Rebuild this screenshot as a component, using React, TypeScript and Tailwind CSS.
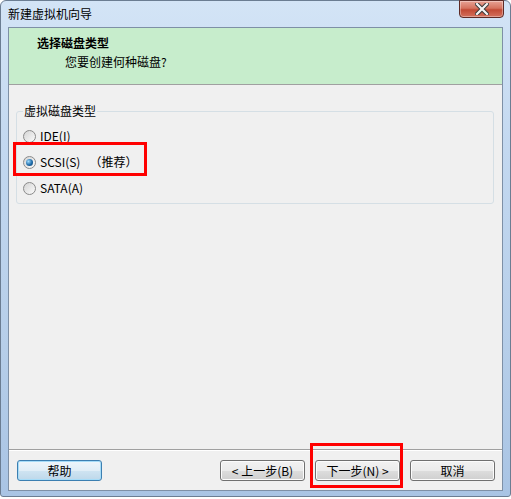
import React from "react";

const font = "font-['SimSun','Noto_Sans_CJK_SC',sans-serif]";

function Radio({ checked, label, extra }: { checked?: boolean; label: string; extra?: string }) {
  return (
    <div className="flex items-center h-[26px]">
      <div className="w-[13px] h-[13px] rounded-full border border-[#8a8a8a] bg-[linear-gradient(135deg,#d4d4d4,#fbfbfb)] flex items-center justify-center">
        {checked && (
          <div className="w-[7px] h-[7px] rounded-full bg-[radial-gradient(circle_at_35%_35%,#9fdcff,#1d6aa8_55%,#0c3d66)]" />
        )}
      </div>
      <span className="ml-[4px] text-[12px] leading-[16px] text-black">{label}</span>
      {extra && <span className="ml-[9px] text-[12px] leading-[16px] text-black">{extra}</span>}
    </div>
  );
}

function Btn({ children, primary }: { children: React.ReactNode; primary?: boolean }) {
  return (
    <button
      className={`w-[85px] h-[21px] rounded-[3px] border text-[12px] leading-[16px] text-black flex items-center justify-center ${
        primary
          ? "border-[#3c7fb1] shadow-[inset_0_0_0_1px_#a6dcf8] bg-[linear-gradient(#eef6fb_0%,#e1eef7_50%,#cfe4f2_51%,#bed8ea_100%)]"
          : "border-[#707070] bg-[linear-gradient(#f2f2f2_0%,#ebebeb_50%,#dddddd_51%,#cfcfcf_100%)] shadow-[inset_0_0_0_1px_#fcfcfc]"
      }`}
    >
      {children}
    </button>
  );
}

export default function App() {
  return (
    <div className={`relative w-[511px] h-[499px] bg-white ${font}`}>
      <div className="w-[511px] h-[497px] flex flex-col rounded-t-[6px] rounded-b-[3px] border border-[#6b7d92] bg-[linear-gradient(180deg,#d3e4f6_0%,#c3d8f0_30%,#b6cee9_70%,#a9c4e4_100%)]">
        {/* Title bar */}
        <div className="h-[26px] flex items-start shrink-0">
          <span className="ml-[7px] mt-[5px] text-[12px] leading-[16px] text-black">新建虚拟机向导</span>
          <div className="ml-auto mr-[6px] w-[45px] h-[18px] -mt-px rounded-b-[4px] border border-[#5e2a25] bg-[linear-gradient(180deg,#e8a295_0%,#d5735f_45%,#c24a35_55%,#d3705c_100%)] shadow-[inset_0_0_0_1px_rgba(255,255,255,0.35)] flex items-center justify-center">
            <svg width="14" height="12" viewBox="0 0 14 12">
              <path d="M2 1 L12 11 M12 1 L2 11" stroke="#3a3a3a" strokeWidth="4.2" strokeLinecap="square" />
              <path d="M2 1 L12 11 M12 1 L2 11" stroke="#f4f4f4" strokeWidth="2.2" strokeLinecap="square" />
            </svg>
          </div>
        </div>

        {/* Client area */}
        <div className="mx-[7px] mb-[5px] flex-1 flex flex-col border border-[#7e90a6] bg-[#f0f0f0]">
          {/* Header */}
          <div className="h-[57px] shrink-0 bg-[#c7edcc] border-b border-[#a0a0a0] pt-[7px]">
            <div className="pl-[28px] text-[12px] leading-[16px] font-bold text-black">选择磁盘类型</div>
            <div className="pl-[56px] mt-[3px] text-[12px] leading-[16px] text-black">您要创建何种磁盘?</div>
          </div>

          {/* Body */}
          <div className="flex-1 pt-[18px] pl-[7px] pr-[8px]">
            <fieldset className="border border-[#d5dfe5] rounded-[3px] h-[101px] px-[6px] pb-[2px] pt-[1px]">
              <legend className="px-px text-[12px] leading-[16px] text-black">虚拟磁盘类型</legend>
              <div className="flex flex-col mt-[3px]">
                <Radio label="IDE(I)" />
                <Radio checked label="SCSI(S)" extra="（推荐）" />
                <Radio label="SATA(A)" />
              </div>
            </fieldset>
          </div>

          {/* Footer */}
          <div className="h-[41px] shrink-0 border-t border-[#a0a0a0] shadow-[inset_0_1px_0_#ffffff] flex items-start pt-[10px] pl-[8px] pr-[7px]">
            <Btn primary>帮助</Btn>
            <div className="ml-auto flex gap-[10px]">
              <Btn>&lt; 上一步(B)</Btn>
              <Btn>下一步(N) &gt;</Btn>
              <Btn>取消</Btn>
            </div>
          </div>
        </div>
      </div>

      {/* Annotation boxes */}
      <div className="absolute left-[13px] top-[142px] w-[134px] h-[34px] border-[3px] border-[#ff0000]" />
      <div className="absolute left-[310px] top-[443px] w-[93px] h-[45px] border-[3px] border-[#ff0000]" />
    </div>
  );
}
